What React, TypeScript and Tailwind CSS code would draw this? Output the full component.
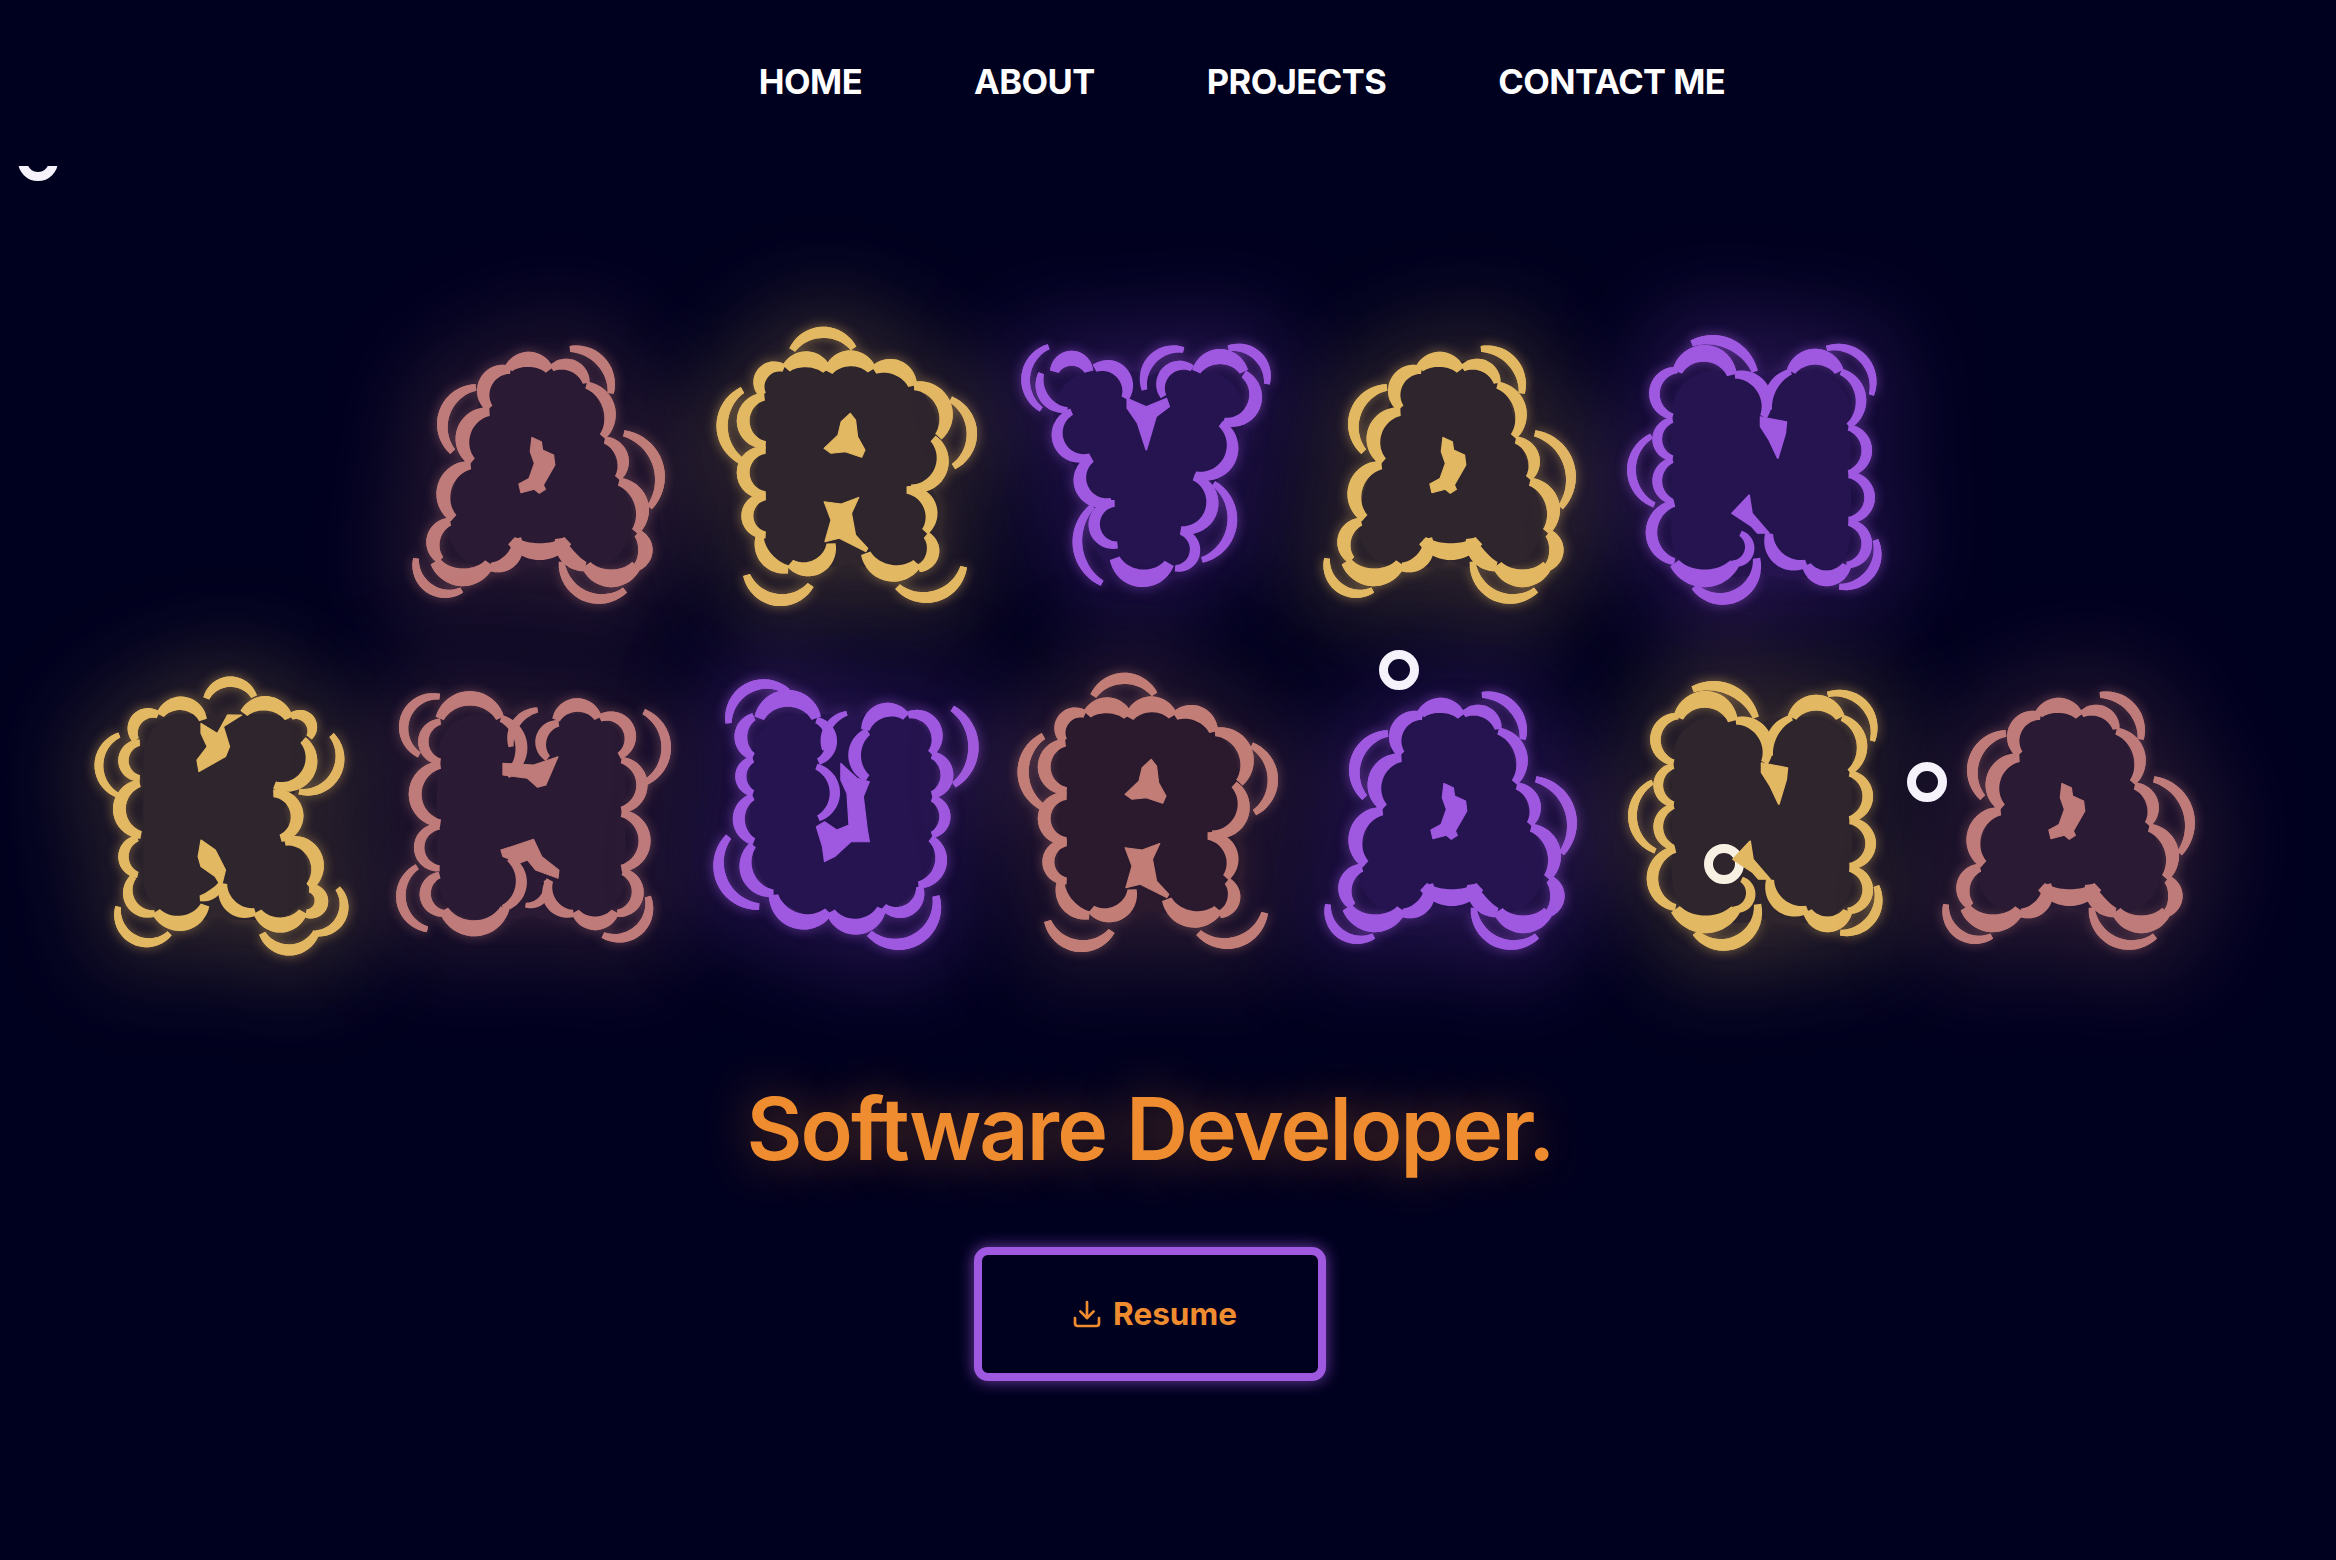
import { Download } from "lucide-react";
import type { ReactNode } from "react";

// each stroke: x1, y1, midX, midY, x2, y2, width (units of the traced crop)
type Stroke = number[];

type Shape = {
  vx: number;
  vy: number;
  sx: number;
  tx: number;
  base: number;
  tw: number;
  strokes: Stroke[];
  blobs: string[];
};

const SHAPES: Record<string, Shape> = {
  A: {
    vx: 12,
    vy: 0,
    sx: 2.45,
    tx: 154,
    base: 222,
    tw: 112,
    strokes: [
      [465, 147, 545, 190, 565, 280, 26],
      [235, 262, 155, 350, 178, 455, 28],
      [597, 400, 685, 520, 660, 622, 26],
      [88, 775, 115, 860, 200, 870, 24],
      [445, 785, 490, 880, 600, 870, 26],
      [315, 205, 362, 178, 415, 210, 38],
      [420, 205, 465, 195, 505, 250, 30],
      [320, 210, 262, 240, 268, 325, 34],
      [505, 255, 560, 320, 545, 410, 30],
      [268, 335, 205, 395, 225, 485, 36],
      [550, 420, 592, 465, 582, 535, 30],
      [222, 495, 155, 585, 180, 655, 36],
      [585, 545, 640, 610, 625, 695, 34],
      [172, 665, 130, 720, 148, 780, 34],
      [630, 700, 650, 750, 630, 800, 36],
      [135, 785, 200, 832, 268, 790, 44],
      [270, 800, 320, 780, 335, 715, 36],
      [322, 722, 390, 755, 460, 722, 42],
      [440, 715, 465, 775, 503, 800, 40],
      [505, 795, 565, 835, 628, 795, 44],
    ],
    blobs: ["372,412 395,425 398,450 425,465 428,495 400,555 405,568 390,580 378,568 345,578 340,552 365,535 378,490 368,455"],
  },
  R: {
    vx: 757,
    vy: 0,
    sx: 2.45,
    tx: 159,
    base: 222,
    tw: 106,
    strokes: [
      [1010, 150, 1085, 97, 1160, 145, 28],
      [888, 270, 838, 375, 888, 485, 28],
      [1398, 298, 1450, 400, 1405, 500, 26],
      [898, 825, 975, 900, 1055, 855, 30],
      [1268, 860, 1345, 892, 1430, 800, 28],
      [938, 285, 935, 225, 990, 205, 32],
      [995, 205, 1045, 178, 1095, 210, 40],
      [1098, 215, 1150, 175, 1205, 210, 40],
      [1210, 210, 1270, 205, 1305, 258, 38],
      [1308, 258, 1375, 300, 1368, 410, 36],
      [1355, 415, 1378, 490, 1300, 565, 32],
      [1290, 570, 1350, 630, 1335, 695, 32],
      [1338, 705, 1355, 750, 1320, 805, 32],
      [1316, 790, 1255, 820, 1190, 760, 42],
      [1005, 790, 1060, 805, 1105, 730, 38],
      [1000, 808, 950, 780, 930, 710, 34],
      [945, 705, 900, 650, 945, 590, 30],
      [945, 585, 890, 510, 945, 450, 32],
      [945, 435, 890, 370, 942, 290, 32],
    ],
    blobs: [
      "1152,340 1165,360 1170,410 1188,450 1180,472 1140,455 1105,460 1088,445 1122,405 1130,365",
      "1088,605 1130,612 1173,592 1155,640 1165,705 1195,745 1190,755 1125,715 1090,725 1105,660",
    ],
  },
  Y: {
    vx: -12,
    vy: 0,
    sx: 1.742,
    tx: 156,
    base: 232,
    tw: 115,
    strokes: [
      [85, 140, 45, 230, 72, 328, 20],
      [320, 150, 262, 185, 252, 270, 22],
      [398, 145, 450, 170, 465, 252, 22],
      [162, 618, 135, 730, 178, 850, 22],
      [372, 550, 405, 660, 352, 780, 22],
      [72, 220, 80, 300, 118, 330, 22],
      [95, 215, 125, 175, 155, 215, 34],
      [165, 205, 210, 215, 218, 295, 30],
      [285, 290, 290, 215, 335, 205, 24],
      [342, 215, 380, 170, 425, 215, 34],
      [425, 222, 445, 300, 390, 365, 30],
      [385, 370, 405, 450, 340, 525, 28],
      [338, 530, 370, 600, 315, 690, 28],
      [315, 695, 340, 750, 305, 805, 24],
      [295, 790, 250, 835, 200, 775, 40],
      [205, 735, 165, 660, 200, 610, 26],
      [195, 605, 140, 550, 160, 475, 30],
      [158, 470, 100, 410, 125, 335, 26],
    ],
    blobs: ["222,295 255,320 290,295 295,320 272,350 255,450 240,370 222,325"],
  },
  N: {
    vx: 1047,
    vy: 0,
    sx: 1.742,
    tx: 160,
    base: 232,
    tw: 112,
    strokes: [
      [1135, 408, 1100, 510, 1140, 615, 20],
      [1205, 130, 1260, 125, 1315, 215, 24],
      [1440, 145, 1500, 170, 1518, 285, 20],
      [1525, 720, 1520, 810, 1462, 860, 22],
      [1318, 775, 1290, 880, 1210, 860, 28],
      [1180, 215, 1225, 160, 1275, 225, 38],
      [1280, 225, 1330, 270, 1330, 350, 28],
      [1340, 330, 1350, 250, 1378, 215, 22],
      [1378, 215, 1420, 170, 1462, 215, 36],
      [1465, 215, 1500, 300, 1478, 378, 24],
      [1478, 382, 1510, 450, 1478, 520, 24],
      [1478, 525, 1515, 590, 1478, 660, 24],
      [1478, 668, 1510, 730, 1475, 795, 24],
      [1475, 795, 1440, 835, 1405, 795, 36],
      [1405, 790, 1360, 780, 1340, 700, 30],
      [1290, 700, 1305, 730, 1275, 790, 22],
      [1280, 790, 1225, 835, 1175, 790, 40],
      [1175, 785, 1135, 690, 1175, 610, 26],
      [1172, 605, 1145, 545, 1172, 480, 22],
      [1172, 475, 1145, 415, 1172, 360, 22],
      [1172, 350, 1140, 280, 1180, 210, 24],
    ],
    blobs: [
      "1325,350 1370,365 1368,400 1355,475 1340,420 1325,380",
      "1305,585 1310,640 1340,700 1320,700 1310,680 1275,640",
    ],
  },
  K: {
    vx: 51,
    vy: -12,
    sx: 2.45,
    tx: 143,
    base: 229,
    tw: 100,
    strokes: [
      [358, 145, 415, 95, 475, 140, 26],
      [145, 255, 95, 340, 140, 435, 22],
      [665, 255, 680, 360, 585, 425, 24],
      [142, 770, 170, 860, 268, 850, 24],
      [495, 850, 560, 900, 628, 845, 28],
      [680, 715, 690, 800, 625, 850, 24],
      [185, 270, 190, 205, 240, 195, 30],
      [245, 195, 295, 160, 350, 210, 34],
      [450, 190, 505, 160, 560, 205, 36],
      [565, 200, 610, 210, 610, 262, 28],
      [595, 270, 615, 340, 525, 405, 32],
      [522, 430, 580, 490, 540, 565, 32],
      [550, 575, 625, 620, 610, 710, 34],
      [610, 715, 640, 750, 602, 790, 34],
      [595, 785, 540, 825, 483, 785, 38],
      [478, 785, 420, 770, 400, 700, 32],
      [342, 745, 375, 730, 395, 700, 24],
      [355, 765, 295, 820, 235, 785, 38],
      [232, 790, 180, 770, 180, 680, 26],
      [190, 675, 155, 620, 190, 565, 26],
      [198, 555, 145, 480, 195, 400, 32],
      [195, 385, 155, 335, 195, 278, 26],
    ],
    blobs: [
      "345,220 385,250 410,195 445,195 400,230 415,290 405,320 340,365 335,330 360,290 345,250",
      "345,570 380,600 405,660 395,710 380,680 345,650 338,620",
    ],
  },
  H: {
    vx: 796,
    vy: -12,
    sx: 2.45,
    tx: 146,
    base: 229,
    tw: 116,
    strokes: [
      [930, 140, 855, 180, 880, 315, 24],
      [1430, 185, 1485, 290, 1430, 400, 24],
      [875, 650, 835, 730, 900, 838, 24],
      [1440, 740, 1425, 830, 1330, 855, 26],
      [1170, 180, 1120, 215, 1105, 290, 22],
      [1190, 690, 1180, 750, 1140, 765, 20],
      [930, 205, 1000, 145, 1078, 205, 36],
      [1080, 205, 1125, 260, 1095, 375, 30],
      [1222, 220, 1178, 270, 1195, 325, 28],
      [1215, 210, 1265, 165, 1318, 205, 34],
      [1322, 205, 1390, 230, 1370, 318, 30],
      [1375, 330, 1425, 395, 1375, 480, 28],
      [1375, 490, 1432, 570, 1375, 655, 30],
      [1378, 665, 1415, 720, 1365, 790, 30],
      [1360, 785, 1310, 820, 1262, 785, 34],
      [1258, 790, 1210, 770, 1200, 690, 30],
      [1100, 625, 1130, 690, 1085, 775, 28],
      [1090, 775, 1015, 835, 940, 780, 40],
      [940, 790, 895, 740, 930, 675, 28],
      [930, 655, 880, 600, 930, 530, 26],
      [932, 520, 870, 440, 932, 345, 32],
      [932, 335, 890, 270, 932, 215, 26],
    ],
    blobs: [
      "1085,340 1160,345 1220,320 1190,405 1170,412 1145,385 1085,375",
      "1080,600 1160,568 1180,620 1222,660 1220,685 1165,660 1145,630 1125,640 1085,620",
    ],
  },
  U: {
    vx: -27,
    vy: -12,
    sx: 2.45,
    tx: 154,
    base: 229,
    tw: 112,
    strokes: [
      [70, 220, 100, 130, 215, 125, 26],
      [618, 175, 670, 290, 622, 405, 26],
      [70, 560, 50, 680, 145, 770, 28],
      [578, 738, 550, 850, 415, 850, 30],
      [360, 190, 315, 230, 305, 300, 20],
      [145, 205, 210, 145, 285, 205, 42],
      [132, 200, 100, 260, 130, 320, 32],
      [130, 328, 100, 380, 130, 430, 28],
      [130, 440, 95, 510, 132, 575, 30],
      [130, 585, 115, 670, 180, 730, 32],
      [180, 735, 250, 815, 315, 785, 40],
      [320, 785, 380, 830, 445, 775, 40],
      [450, 770, 500, 785, 538, 710, 30],
      [535, 705, 590, 640, 565, 565, 30],
      [568, 555, 600, 500, 568, 445, 28],
      [568, 435, 605, 375, 568, 315, 32],
      [565, 310, 580, 250, 510, 195, 30],
      [505, 200, 455, 180, 405, 240, 36],
      [412, 245, 380, 300, 410, 385, 32],
      [285, 210, 322, 270, 290, 335, 28],
      [285, 350, 330, 420, 290, 505, 26],
    ],
    blobs: ["345,340 385,385 415,395 400,440 410,540 415,575 370,575 330,620 305,635 300,590 285,530 305,515 335,540 365,525 360,430 345,390"],
  },
};

const THEMES = {
  pink: {
    fill: "#bf7b79",
    tint: "#2a1a33",
    glow: "[filter:drop-shadow(0_0_6px_rgba(191,123,121,0.45))_drop-shadow(0_0_50px_rgba(191,123,121,0.8))]",
    soft: "[filter:drop-shadow(0_0_12px_#2a1a33)]",
  },
  coral: {
    fill: "#c27e76",
    tint: "#2b1a2e",
    glow: "[filter:drop-shadow(0_0_6px_rgba(194,126,118,0.45))_drop-shadow(0_0_50px_rgba(194,126,118,0.8))]",
    soft: "[filter:drop-shadow(0_0_12px_#2b1a2e)]",
  },
  gold: {
    fill: "#e3b862",
    tint: "#2e252d",
    glow: "[filter:drop-shadow(0_0_6px_rgba(227,184,98,0.5))_drop-shadow(0_0_50px_rgba(227,184,98,0.8))]",
    soft: "[filter:drop-shadow(0_0_12px_#2e252d)]",
  },
  purple: {
    fill: "#9f58e0",
    tint: "#25144f",
    glow: "[filter:drop-shadow(0_0_6px_rgba(159,88,224,0.55))_drop-shadow(0_0_50px_rgba(159,88,224,0.85))]",
    soft: "[filter:drop-shadow(0_0_12px_#25144f)]",
  },
};

type ThemeName = keyof typeof THEMES;
type Item = { ch: string; theme: ThemeName; dx?: number };

const ROW_ONE: Item[] = [
  { ch: "A", theme: "pink" },
  { ch: "R", theme: "gold" },
  { ch: "Y", theme: "purple" },
  { ch: "A", theme: "gold", dx: -1 },
  { ch: "N", theme: "purple" },
];

const ROW_TWO: Item[] = [
  { ch: "K", theme: "gold" },
  { ch: "H", theme: "pink" },
  { ch: "U", theme: "purple" },
  { ch: "R", theme: "coral", dx: -3 },
  { ch: "A", theme: "purple" },
  { ch: "N", theme: "gold", dx: 1 },
  { ch: "A", theme: "pink", dx: 10 },
];

// crescent around the circle through the three points, which are traced on a
// crop stretched by sx / 3, so bring them back to page pixels first
function crescent(stroke: Stroke, shape: Shape) {
  const px = (x: number) => (x - shape.vx) / shape.sx;
  const py = (y: number) => (y - shape.vy) / 3;
  const [x1, y1, mx, my, x2, y2] = [
    px(stroke[0]),
    py(stroke[1]),
    px(stroke[2]),
    py(stroke[3]),
    px(stroke[4]),
    py(stroke[5]),
  ];
  const w = stroke[6] * (shape.sx > 2 ? 0.4 : 0.44);
  const d = 2 * (x1 * (my - y2) + mx * (y2 - y1) + x2 * (y1 - my));
  const s1 = x1 * x1 + y1 * y1;
  const s2 = mx * mx + my * my;
  const s3 = x2 * x2 + y2 * y2;
  const ux = (s1 * (my - y2) + s2 * (y2 - y1) + s3 * (y1 - my)) / d;
  const uy = (s1 * (x2 - mx) + s2 * (x1 - x2) + s3 * (mx - x1)) / d;
  const r = Math.hypot(x1 - ux, y1 - uy);
  const a1 = Math.atan2(y1 - uy, x1 - ux);
  const full = Math.PI * 2;
  let span = (Math.atan2(y2 - uy, x2 - ux) - a1 + full * 2) % full;
  const toMid = (Math.atan2(my - uy, mx - ux) - a1 + full * 2) % full;
  if (toMid > span) span -= full;

  const outer: string[] = [];
  const inner: string[] = [];
  for (let i = 0; i <= 20; i++) {
    const t = i / 20;
    const a = a1 + span * t;
    const half = (w * (0.6 + 0.4 * Math.sin(Math.PI * t))) / 2;
    outer.push(`${ux + (r + half) * Math.cos(a)},${uy + (r + half) * Math.sin(a)}`);
    inner.unshift(`${ux + (r - half) * Math.cos(a)},${uy + (r - half) * Math.sin(a)}`);
  }
  return [...outer, ...inner].join(" ");
}

function Outline({ shape, fill, dx, className }: { shape: Shape; fill: string; dx: number; className: string }) {
  return (
    <svg className={`absolute inset-0 h-full w-full overflow-visible ${className}`} viewBox="0 0 304 346" fill={fill} aria-hidden>
      <g transform={`translate(${dx} 0)`}>
        {shape.strokes.map((stroke, i) => (
          <polygon key={i} points={crescent(stroke, shape)} />
        ))}
        <g transform={`scale(${1 / shape.sx} ${1 / 3}) translate(${-shape.vx} ${-shape.vy})`}>
          {shape.blobs.map((points, i) => (
            <polygon key={i} points={points} stroke={fill} strokeWidth={3} strokeLinejoin="round" />
          ))}
        </g>
      </g>
    </svg>
  );
}

function Letter({ ch, theme, dx = 0, children }: Item & { children?: ReactNode }) {
  const shape = SHAPES[ch];
  const look = THEMES[theme];
  return (
    <div className="relative h-[346px] w-[304px] shrink-0">
      <Outline shape={shape} fill={look.fill} dx={dx} className={look.glow} />
      <svg className={`absolute inset-0 h-full w-full overflow-visible ${look.soft}`} viewBox="0 0 304 346">
        <text
          x={shape.tx + dx}
          y={shape.base}
          fontSize={160}
          fontWeight={900}
          textAnchor="middle"
          textLength={shape.tw}
          lengthAdjust="spacingAndGlyphs"
          fill={look.tint}
          stroke={look.tint}
          strokeWidth={90}
          strokeLinejoin="round"
        >
          {ch}
        </text>
      </svg>
      {children}
      <Outline shape={shape} fill={look.fill} dx={dx} className="" />
    </div>
  );
}

function Ring({ className }: { className: string }) {
  return <div className={`absolute h-[40px] w-[40px] rounded-full border-[9px] ${className}`} />;
}

export default function App() {
  return (
    <div className="relative h-[1560px] w-full overflow-hidden bg-[#00001f] [font-family:Inter,sans-serif]">
      <nav className="relative z-10 flex h-[166px] items-start justify-center gap-[112px] bg-[#00001f] pl-[148px] pt-[60px] text-[34.5px] leading-[44px] font-[650] tracking-[-0.55px] text-white">
        <a>HOME</a>
        <a>ABOUT</a>
        <a>PROJECTS</a>
        <a>CONTACT ME</a>
      </nav>

      <Ring className="left-[18px] top-[141px] border-[#f6f2fb]" />

      <main className="flex flex-col items-center pt-[134px]">
        <div className="flex justify-center pr-[46px]">
          {ROW_ONE.map((item, i) => (
            <Letter key={i} {...item} />
          ))}
        </div>
        <div className="flex justify-center pr-[46px]">
          {ROW_TWO.map((item, i) => (
            <Letter key={i} {...item}>
              {item.ch === "N" ? (
                <Ring className="left-[103px] top-[198px] border-[#f8f1e3]" />
              ) : null}
            </Letter>
          ))}
        </div>

        <div className="mt-[85px] flex flex-col items-center pr-[36px]">
          <h2 className="text-[86px] leading-[104px] font-[625] tracking-[-1.9px] text-[#ee8c2f] [text-shadow:0_0_50px_rgba(238,140,47,0.45)]">
            Software Developer.
          </h2>
          <button className="mt-[66px] flex h-[134px] w-[352px] items-center justify-center gap-[10px] rounded-[14px] border-[8px] border-[#9f58e0] bg-[#00001f] pl-[8px] text-[31.5px] font-bold text-[#ee8c2f] shadow-[0_0_16px_rgba(159,88,224,0.7)]">
            <Download size={32} strokeWidth={2} />
            Resume
          </button>
        </div>
      </main>

      <Ring className="left-[1379px] top-[650px] border-[#f6f2fb]" />
      <Ring className="left-[1907px] top-[762px] border-[#f6f2fb]" />
    </div>
  );
}
